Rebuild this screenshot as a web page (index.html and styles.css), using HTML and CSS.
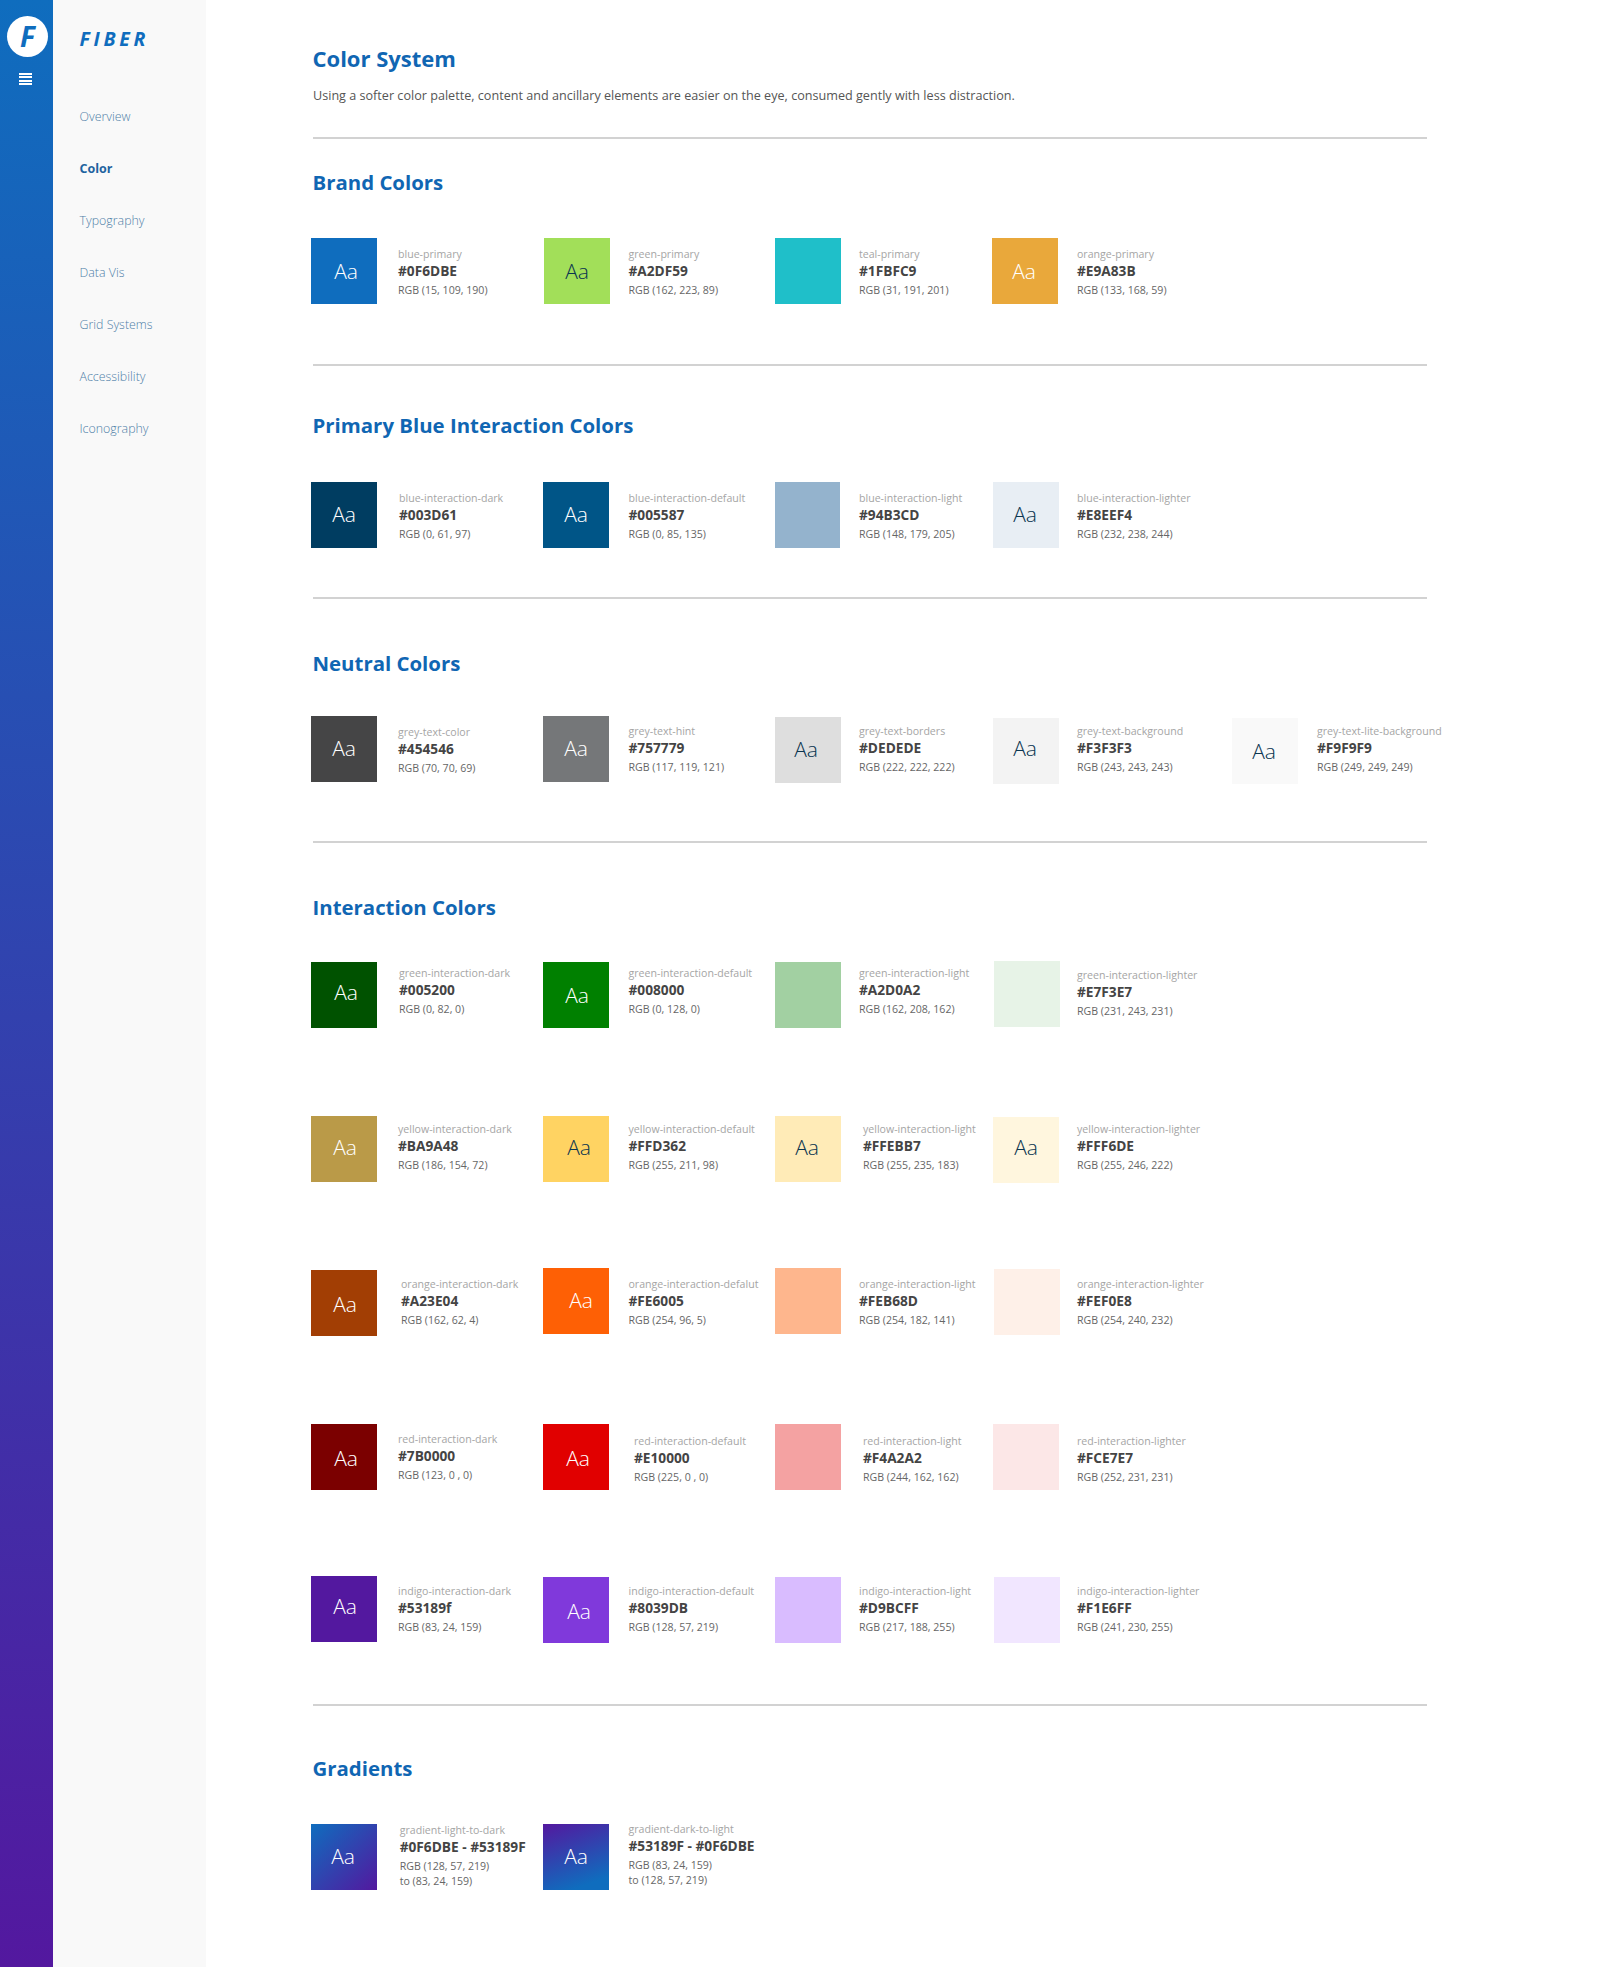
FILE: index.html
```html
<!DOCTYPE html>
<html lang="en">
<head>
    <meta charset="UTF-8">
    <title>Color System - Fiber</title>
    <link rel="stylesheet" href="styles.css">
</head>
<body>
    <div class="rail">
        <div class="rail-logo">F</div>
        <div class="rail-menu"><span></span><span></span><span></span><span></span></div>
    </div>
    <div class="sidebar">
        <div class="brand">FIBER</div>
        <ul class="nav">
            <li><a href="#">Overview</a></li>
            <li><a href="#" class="active">Color</a></li>
            <li><a href="#">Typography</a></li>
            <li><a href="#">Data Vis</a></li>
            <li><a href="#">Grid Systems</a></li>
            <li><a href="#">Accessibility</a></li>
            <li><a href="#">Iconography</a></li>
        </ul>
    </div>
    <div class="main">
        <h1>Color System</h1>
        <p class="intro">Using a softer color palette, content and ancillary elements are easier on the eye, consumed gently with less distraction.</p>
        <hr class="rule-intro">

        <section class="section-brand">
            <h2>Brand Colors</h2>
            <div class="row">
                <div class="cell blue-primary"><div class="swatch light">Aa</div><div class="info"><div class="name">blue-primary</div><div class="hex">#0F6DBE</div><div class="rgb">RGB (15, 109, 190)</div></div></div>
                <div class="cell green-primary"><div class="swatch dark">Aa</div><div class="info"><div class="name">green-primary</div><div class="hex">#A2DF59</div><div class="rgb">RGB (162, 223, 89)</div></div></div>
                <div class="cell teal-primary"><div class="swatch"></div><div class="info"><div class="name">teal-primary</div><div class="hex">#1FBFC9</div><div class="rgb">RGB (31, 191, 201)</div></div></div>
                <div class="cell orange-primary"><div class="swatch light">Aa</div><div class="info"><div class="name">orange-primary</div><div class="hex">#E9A83B</div><div class="rgb">RGB (133, 168, 59)</div></div></div>
            </div>
        </section>
        <hr>

        <section class="section-blue">
            <h2>Primary Blue Interaction Colors</h2>
            <div class="row">
                <div class="cell blue-dark"><div class="swatch light">Aa</div><div class="info"><div class="name">blue-interaction-dark</div><div class="hex">#003D61</div><div class="rgb">RGB (0, 61, 97)</div></div></div>
                <div class="cell blue-default"><div class="swatch light">Aa</div><div class="info"><div class="name">blue-interaction-default</div><div class="hex">#005587</div><div class="rgb">RGB (0, 85, 135)</div></div></div>
                <div class="cell blue-light"><div class="swatch"></div><div class="info"><div class="name">blue-interaction-light</div><div class="hex">#94B3CD</div><div class="rgb">RGB (148, 179, 205)</div></div></div>
                <div class="cell blue-lighter"><div class="swatch dark">Aa</div><div class="info"><div class="name">blue-interaction-lighter</div><div class="hex">#E8EEF4</div><div class="rgb">RGB (232, 238, 244)</div></div></div>
            </div>
        </section>
        <hr>

        <section class="section-neutral">
            <h2>Neutral Colors</h2>
            <div class="row row-neutral">
                <div class="cell grey-color"><div class="swatch light">Aa</div><div class="info"><div class="name">grey-text-color</div><div class="hex">#454546</div><div class="rgb">RGB (70, 70, 69)</div></div></div>
                <div class="cell grey-hint"><div class="swatch light">Aa</div><div class="info"><div class="name">grey-text-hint</div><div class="hex">#757779</div><div class="rgb">RGB (117, 119, 121)</div></div></div>
                <div class="cell grey-borders"><div class="swatch dark">Aa</div><div class="info"><div class="name">grey-text-borders</div><div class="hex">#DEDEDE</div><div class="rgb">RGB (222, 222, 222)</div></div></div>
                <div class="cell grey-background"><div class="swatch dark">Aa</div><div class="info"><div class="name">grey-text-background</div><div class="hex">#F3F3F3</div><div class="rgb">RGB (243, 243, 243)</div></div></div>
                <div class="cell grey-lite"><div class="swatch dark">Aa</div><div class="info"><div class="name">grey-text-lite-background</div><div class="hex">#F9F9F9</div><div class="rgb">RGB (249, 249, 249)</div></div></div>
            </div>
        </section>
        <hr>

        <section class="section-interaction">
            <h2>Interaction Colors</h2>
            <div class="row row-green">
                <div class="cell green-dark"><div class="swatch light">Aa</div><div class="info"><div class="name">green-interaction-dark</div><div class="hex">#005200</div><div class="rgb">RGB (0, 82, 0)</div></div></div>
                <div class="cell green-default"><div class="swatch light">Aa</div><div class="info"><div class="name">green-interaction-default</div><div class="hex">#008000</div><div class="rgb">RGB (0, 128, 0)</div></div></div>
                <div class="cell green-light"><div class="swatch"></div><div class="info"><div class="name">green-interaction-light</div><div class="hex">#A2D0A2</div><div class="rgb">RGB (162, 208, 162)</div></div></div>
                <div class="cell green-lighter"><div class="swatch"></div><div class="info"><div class="name">green-interaction-lighter</div><div class="hex">#E7F3E7</div><div class="rgb">RGB (231, 243, 231)</div></div></div>
            </div>
            <div class="row row-yellow">
                <div class="cell yellow-dark"><div class="swatch light">Aa</div><div class="info"><div class="name">yellow-interaction-dark</div><div class="hex">#BA9A48</div><div class="rgb">RGB (186, 154, 72)</div></div></div>
                <div class="cell yellow-default"><div class="swatch dark">Aa</div><div class="info"><div class="name">yellow-interaction-default</div><div class="hex">#FFD362</div><div class="rgb">RGB (255, 211, 98)</div></div></div>
                <div class="cell yellow-light"><div class="swatch dark">Aa</div><div class="info"><div class="name">yellow-interaction-light</div><div class="hex">#FFEBB7</div><div class="rgb">RGB (255, 235, 183)</div></div></div>
                <div class="cell yellow-lighter"><div class="swatch dark">Aa</div><div class="info"><div class="name">yellow-interaction-lighter</div><div class="hex">#FFF6DE</div><div class="rgb">RGB (255, 246, 222)</div></div></div>
            </div>
            <div class="row row-orange">
                <div class="cell orange-dark"><div class="swatch light">Aa</div><div class="info"><div class="name">orange-interaction-dark</div><div class="hex">#A23E04</div><div class="rgb">RGB (162, 62, 4)</div></div></div>
                <div class="cell orange-default"><div class="swatch light">Aa</div><div class="info"><div class="name">orange-interaction-defalut</div><div class="hex">#FE6005</div><div class="rgb">RGB (254, 96, 5)</div></div></div>
                <div class="cell orange-light"><div class="swatch"></div><div class="info"><div class="name">orange-interaction-light</div><div class="hex">#FEB68D</div><div class="rgb">RGB (254, 182, 141)</div></div></div>
                <div class="cell orange-lighter"><div class="swatch"></div><div class="info"><div class="name">orange-interaction-lighter</div><div class="hex">#FEF0E8</div><div class="rgb">RGB (254, 240, 232)</div></div></div>
            </div>
            <div class="row row-red">
                <div class="cell red-dark"><div class="swatch light">Aa</div><div class="info"><div class="name">red-interaction-dark</div><div class="hex">#7B0000</div><div class="rgb">RGB (123, 0 , 0)</div></div></div>
                <div class="cell red-default"><div class="swatch light">Aa</div><div class="info"><div class="name">red-interaction-default</div><div class="hex">#E10000</div><div class="rgb">RGB (225, 0 , 0)</div></div></div>
                <div class="cell red-light"><div class="swatch"></div><div class="info"><div class="name">red-interaction-light</div><div class="hex">#F4A2A2</div><div class="rgb">RGB (244, 162, 162)</div></div></div>
                <div class="cell red-lighter"><div class="swatch"></div><div class="info"><div class="name">red-interaction-lighter</div><div class="hex">#FCE7E7</div><div class="rgb">RGB (252, 231, 231)</div></div></div>
            </div>
            <div class="row row-indigo">
                <div class="cell indigo-dark"><div class="swatch light">Aa</div><div class="info"><div class="name">indigo-interaction-dark</div><div class="hex">#53189f</div><div class="rgb">RGB (83, 24, 159)</div></div></div>
                <div class="cell indigo-default"><div class="swatch light">Aa</div><div class="info"><div class="name">indigo-interaction-default</div><div class="hex">#8039DB</div><div class="rgb">RGB (128, 57, 219)</div></div></div>
                <div class="cell indigo-light"><div class="swatch"></div><div class="info"><div class="name">indigo-interaction-light</div><div class="hex">#D9BCFF</div><div class="rgb">RGB (217, 188, 255)</div></div></div>
                <div class="cell indigo-lighter"><div class="swatch"></div><div class="info"><div class="name">indigo-interaction-lighter</div><div class="hex">#F1E6FF</div><div class="rgb">RGB (241, 230, 255)</div></div></div>
            </div>
        </section>
        <hr>

        <section class="section-gradients">
            <h2>Gradients</h2>
            <div class="row">
                <div class="cell gradient-down"><div class="swatch light">Aa</div><div class="info"><div class="name">gradient-light-to-dark</div><div class="hex">#0F6DBE - #53189F</div><div class="rgb">RGB (128, 57, 219)<br>to (83, 24, 159)</div></div></div>
                <div class="cell gradient-up"><div class="swatch light">Aa</div><div class="info"><div class="name">gradient-dark-to-light</div><div class="hex">#53189F - #0F6DBE</div><div class="rgb">RGB (83, 24, 159)<br>to (128, 57, 219)</div></div></div>
            </div>
        </section>
    </div>
</body>
</html>
```

FILE: styles.css
```css
body {
    margin: 0;
    display: flex;
    height: 1967px;
    background: #fff;
    font-family: 'Open Sans', sans-serif;
    color: #454546;
    overflow: hidden;
}

/* left rail */
.rail {
    width: 53px;
    flex-shrink: 0;
    background: linear-gradient(180deg, #0f6dbe, #53189f);
    padding: 16px 0 0 7px;
    box-sizing: border-box;
}
.rail-logo {
    width: 41px;
    height: 41px;
    border-radius: 50%;
    background: #fff;
    color: #0f6dbe;
    font-size: 28px;
    font-weight: 700;
    font-style: italic;
    line-height: 41px;
    text-align: center;
}
.rail-menu {
    margin: 16px 0 0 12px;
    width: 13px;
    display: flex;
    flex-direction: column;
    gap: 1.4px;
}
.rail-menu span {
    height: 2px;
    background: #fff;
}

/* sidebar */
.sidebar {
    width: 153px;
    flex-shrink: 0;
    background: #f9f9f9;
    padding: 25px 0 0 26.5px;
    box-sizing: border-box;
}
.brand {
    color: #0f6dbe;
    font-size: 19.5px;
    font-weight: 700;
    font-style: italic;
    letter-spacing: 3.7px;
    line-height: 28px;
}
.nav {
    list-style: none;
    margin: 52px 0 0;
    padding: 0;
}
.nav li {
    height: 52px;
    line-height: 20px;
}
.nav a {
    color: #4f7fa8;
    font-size: 12.4px;
    font-weight: 300;
    text-decoration: none;
}
.nav a.active {
    color: #1f639f;
    font-weight: 700;
    font-size: 12.5px;
}

/* main column */
.main {
    flex-grow: 1;
    padding-left: 106.5px;
}
h1, h2 {
    margin: 0;
    color: #1066b3;
    font-weight: 700;
    line-height: 28px;
}
h1 {
    padding-top: 44px;
    font-size: 22px;
}
h2 {
    margin-bottom: 42px;
    font-size: 20.4px;
}
.intro {
    margin: 15px 0 0 0.5px;
    color: #555;
    font-size: 12.62px;
    line-height: 18px;
}
hr {
    width: 1114px;
    height: 2px;
    margin: 0 0 0 0.5px;
    border: 0;
    background: #d2d2d2;
}
.rule-intro {
    margin-top: 32px;
}

.section-brand {
    padding: 29px 0 60px;
}
.section-blue {
    padding: 45px 0 49px;
}
.section-blue h2 {
    margin-bottom: 43px;
}
.section-neutral {
    padding: 50px 0 59px;
}
.section-neutral h2 {
    margin-bottom: 39px;
}
.section-interaction {
    padding: 50px 0 62px;
}
.section-interaction h2 {
    margin-bottom: 40px;
}
.section-gradients {
    padding-top: 48px;
}

/* swatch rows */
.row {
    display: grid;
    grid-template-columns: 232px 232px 217px 240px 240px;
    height: 66px;
    margin-left: -1.5px;
}
.row-green { margin-bottom: 89px; }
.row-yellow { margin-bottom: 86px; }
.row-orange { margin-bottom: 90px; }
.row-red { margin-bottom: 86px; }

.cell {
    display: grid;
    grid-template-columns: 66px auto;
    align-items: start;
}
.swatch {
    width: 66px;
    height: 66px;
    font-size: 21px;
    font-weight: 300;
    line-height: 66px;
    text-align: center;
}
.swatch.light {
    color: #fff;
}
.swatch.dark {
    color: #0b3550;
}
.info {
    margin: 8px 0 0 21px;
    white-space: nowrap;
}
.cell:nth-child(2) .info { margin-left: 19.5px; }
.cell:nth-child(3) .info { margin-left: 18px; }
.cell:nth-child(4) .info { margin-left: 19px; }
.cell:nth-child(5) .info { margin-left: 19px; }

.row-neutral .info { margin-top: 7px; }
.row-green .info { margin-top: 4px; }
.row-yellow .info { margin-top: 5px; }
.row-red .info { margin-top: 9px; }
.row-indigo .info { margin-top: 7px; }

.name {
    color: #a5a5a5;
    font-size: 10.6px;
    line-height: 16px;
}
.hex {
    color: #444;
    font-size: 13.7px;
    font-weight: 700;
    line-height: 18px;
}
.rgb {
    color: #666;
    font-size: 10.6px;
    line-height: 15px;
    margin-top: 3px;
}

/* brand */
.blue-primary .swatch { background: #0F6DBE; text-indent: 4px; }
.green-primary .swatch { background: #A2DF59; margin-left: 1px; }
.teal-primary .swatch { background: #1FBFC9; }
.orange-primary .swatch { background: #E9A83B; text-indent: -2px; }

/* primary blue */
.blue-dark .swatch { background: #003D61; line-height: 64px; }
.blue-dark .info { padding-left: 1px; }
.blue-default .swatch { background: #005587; line-height: 64px; }
.blue-light .swatch { background: #94B3CD; width: 65px; }
.blue-lighter .swatch { background: #E8EEF4; margin-left: 1px; line-height: 64px; text-indent: -2px; }

/* neutral */
.grey-color .swatch { background: #454546; line-height: 64px; }
.row-neutral .grey-color .info { margin-top: 8px; }
.grey-hint .swatch { background: #757779; line-height: 64px; }
.grey-borders .swatch { background: #DEDEDE; margin-top: 1px; line-height: 64px; text-indent: -4px; }
.grey-background .swatch { background: #F3F3F3; margin: 2px 0 0 1px; line-height: 60px; text-indent: -2px; }
.grey-lite .swatch { background: #F9F9F9; margin-top: 2px; text-indent: -2px; }

/* green */
.green-dark .swatch { background: #005200; margin-top: 1px; line-height: 60px; text-indent: 4px; }
.green-dark .info { padding-left: 1px; }
.green-default .swatch { background: #008000; margin-top: 1px; text-indent: 2px; }
.green-light .swatch { background: #A2D0A2; margin-top: 1px; }
.green-lighter .swatch { background: #E7F3E7; margin-left: 2px; }
.row-green .green-lighter .info { margin-top: 6px; }

/* yellow */
.yellow-dark .swatch { background: #BA9A48; line-height: 62px; text-indent: 2px; }
.yellow-default .swatch { background: #FFD362; line-height: 62px; text-indent: 6px; }
.yellow-light .swatch { background: #FFEBB7; line-height: 62px; text-indent: -2px; }
.yellow-light .info { padding-left: 4px; }
.yellow-lighter .swatch { background: #FFF6DE; margin: 1px 0 0 1px; line-height: 60px; }

/* orange */
.orange-dark .swatch { background: #A23E04; margin-top: 2px; line-height: 68px; text-indent: 2px; }
.orange-dark .info { padding-left: 3px; }
.orange-default .swatch { background: #FE6005; line-height: 64px; text-indent: 10px; }
.orange-light .swatch { background: #FEB68D; }
.orange-lighter .swatch { background: #FEF0E8; margin: 1px 0 0 2px; }

/* red */
.red-dark .swatch { background: #7B0000; line-height: 68px; text-indent: 4px; }
.row-red .red-dark .info { margin-top: 7px; }
.red-default .swatch { background: #E10000; line-height: 68px; text-indent: 4px; }
.red-default .info { padding-left: 5.5px; }
.red-light .swatch { background: #F4A2A2; }
.red-light .info { padding-left: 4px; }
.red-lighter .swatch { background: #FCE7E7; margin-left: 1px; }

/* indigo */
.indigo-dark .swatch { background: #53189f; line-height: 60px; text-indent: 2px; }
.indigo-default .swatch { background: #8039DB; margin-top: 1px; line-height: 68px; text-indent: 6px; }
.indigo-light .swatch { background: #D9BCFF; margin-top: 1px; }
.indigo-lighter .swatch { background: #F1E6FF; margin: 1px 0 0 2px; }

/* gradients */
.gradient-down .swatch { background: linear-gradient(135deg, #0f6dbe, #53189f); line-height: 64px; text-indent: -2px; }
.gradient-down .info { margin-top: -2px; padding-left: 1.7px; }
.gradient-up .swatch { background: linear-gradient(160deg, #53189f, #0f6dbe 85%); line-height: 64px; }
.gradient-up .info { margin-top: -3px; }
```
